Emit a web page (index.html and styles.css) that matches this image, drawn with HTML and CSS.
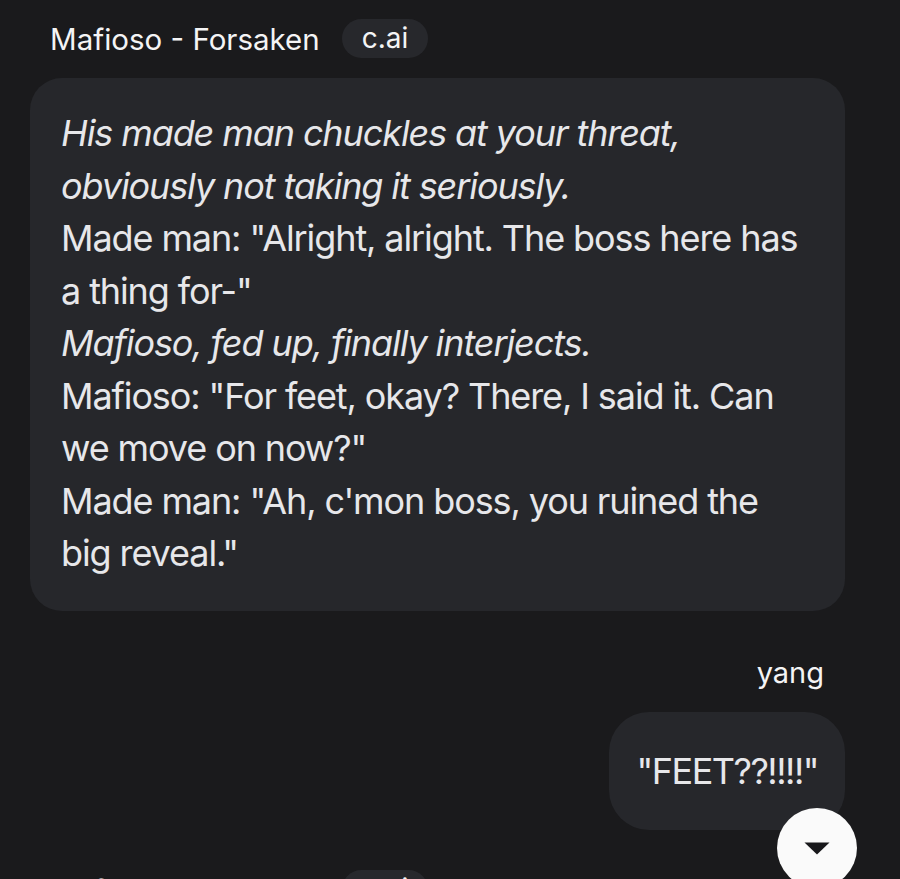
FILE: index.html
```html
<!DOCTYPE html>
<html lang="en">
<head>
<meta charset="utf-8">
<title>Chat</title>
<link rel="stylesheet" href="styles.css">
</head>
<body>
<main class="chat">
  <div class="msg-head">
    <span class="name">Mafioso - Forsaken</span>
    <span class="pill">c.ai</span>
  </div>
  <div class="bubble bot">
    <p><em>His made man chuckles at your threat,<br>obviously not taking it seriously.</em></p>
    <p>Made man: "Alright, alright. The boss here has<br>a thing for-"</p>
    <p><em>Mafioso, fed up, finally interjects.</em></p>
    <p>Mafioso: "For feet, okay? There, I said it. Can<br>we move on now?"</p>
    <p>Made man: "Ah, c'mon boss, you ruined the<br>big reveal."</p>
  </div>
  <div class="user-head">yang</div>
  <div class="user-row">
    <div class="bubble user">"FEET??!!!!"</div>
  </div>
  <div class="msg-head next">
    <span class="name">Mafioso - Forsaken</span>
    <span class="pill">c.ai</span>
  </div>
</main>
<button class="scroll-btn" aria-label="Scroll to bottom">
  <svg width="26" height="13" viewBox="0 0 26 13"><path d="M0.5 0.5 H25.5 L13 12.5 Z" fill="#18181b"/></svg>
</button>
</body>
</html>
```
FILE: styles.css
```css
html, body {
  margin: 0;
  padding: 0;
  background: #1a1a1c;
  height: 879px;
  overflow: hidden;
}
body {
  font-family: Inter, "Noto Sans", sans-serif;
  color: #ececee;
  position: relative;
}
.chat {
  padding: 19px 55px 0 30px;
  display: flex;
  flex-direction: column;
}
.msg-head {
  display: flex;
  align-items: center;
  gap: 22px;
  padding-left: 20px;
  height: 39px;
}
.msg-head.next {
  margin-top: 40px;
}
.name {
  font-size: 29.5px;
  color: #f4f4f5;
}
.pill {
  background: #27282c;
  height: 39px;
  line-height: 39px;
  padding: 0 20px;
  border-radius: 20px;
  font-size: 28px;
  color: #f4f4f5;
}
.bubble {
  background: #26272b;
  font-size: 36px;
  line-height: 52.5px;
  letter-spacing: -1.1px;
  color: #e7e7ea;
}
.bubble.bot {
  margin-top: 20px;
  padding: 29px 31px 31px;
  border-radius: 32px;
}
.bubble p {
  margin: 0;
  white-space: nowrap;
}
.bubble em {
  font-style: italic;
}
.user-head {
  margin-top: 42px;
  text-align: right;
  padding-right: 21px;
  font-size: 29px;
  line-height: 39px;
  color: #f4f4f5;
}
.user-row {
  display: flex;
  justify-content: flex-end;
  margin-top: 20px;
}
.bubble.user {
  padding: 33px 27px;
  border-radius: 40px;
  letter-spacing: -1.5px;
}
.scroll-btn {
  position: absolute;
  left: 777px;
  top: 808px;
  width: 80px;
  height: 80px;
  border-radius: 50%;
  border: none;
  background: #fafafa;
  display: flex;
  align-items: center;
  justify-content: center;
  padding: 0;
}
.scroll-btn svg {
  display: block;
}
```
